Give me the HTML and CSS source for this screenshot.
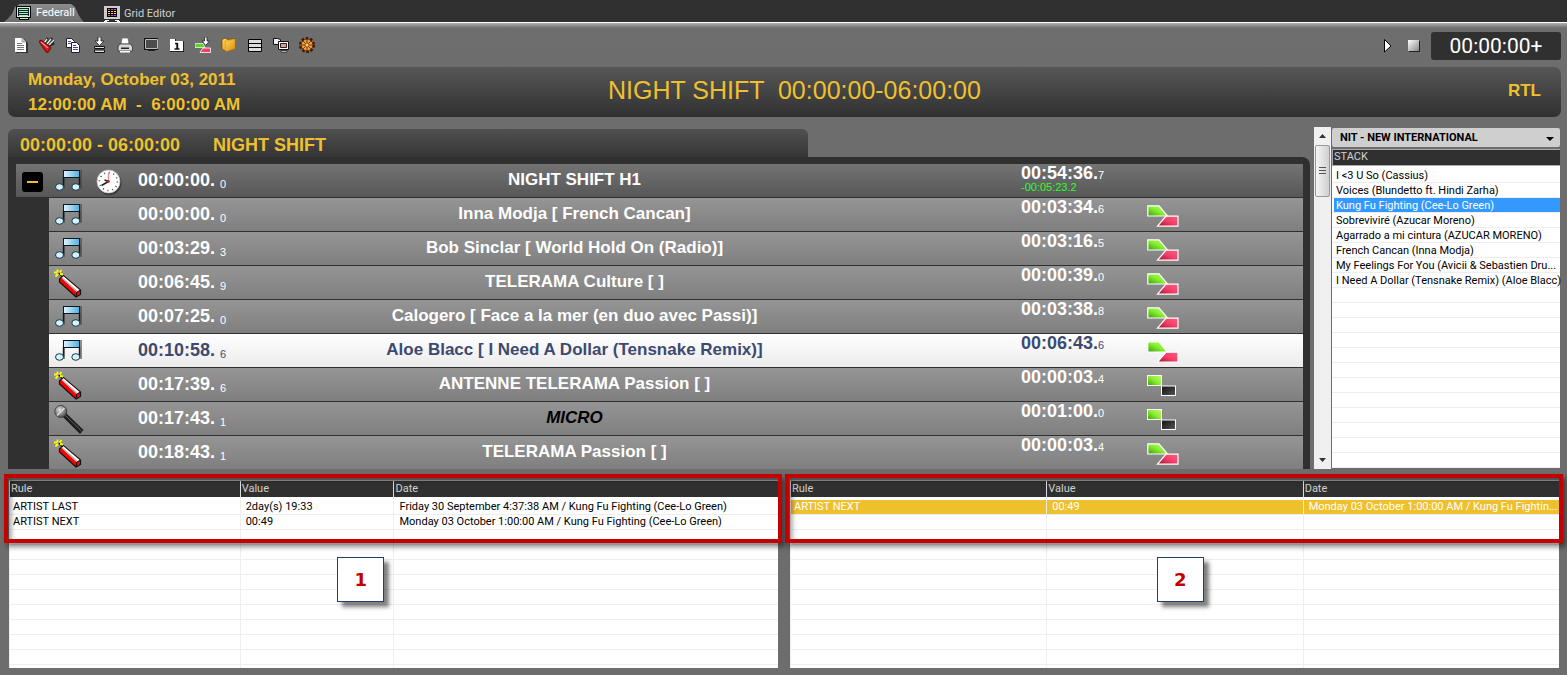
FILE: index.html
```html
<!DOCTYPE html>
<html lang="en">
<head>
<meta charset="utf-8">
<title>Federall - Grid Editor</title>
<link rel="stylesheet" href="styles.css">
</head>
<body>
<svg class="defs" aria-hidden="true">
  <defs>
    <linearGradient id="gBeam" x1="0" x2="1"><stop offset="0" stop-color="#e4f5fc"/><stop offset="1" stop-color="#4fb0de"/></linearGradient>
    <linearGradient id="gGreen" x1="0" y1="1" x2="1" y2="0"><stop offset="0" stop-color="#3f9a10"/><stop offset=".5" stop-color="#86f030"/><stop offset="1" stop-color="#c8f870"/></linearGradient>
    <linearGradient id="gRed" x1="0" y1="1" x2="1" y2="0"><stop offset="0" stop-color="#a01030"/><stop offset=".5" stop-color="#f04068"/><stop offset="1" stop-color="#ff6080"/></linearGradient>
    <linearGradient id="gBlack" x1="0" x2="1" y2="1"><stop offset="0" stop-color="#111"/><stop offset="1" stop-color="#555"/></linearGradient>
    <linearGradient id="gStop" x1="0" y1="0" x2="1" y2="1"><stop offset="0" stop-color="#fff"/><stop offset="1" stop-color="#888"/></linearGradient>
    <linearGradient id="gFolder" x1="0" y1="0" x2="1" y2="1"><stop offset="0" stop-color="#ffd860"/><stop offset="1" stop-color="#e08a08"/></linearGradient>
    <radialGradient id="gMic" cx=".4" cy=".35" r=".7"><stop offset="0" stop-color="#e0e0e0"/><stop offset="1" stop-color="#444"/></radialGradient>
    <symbol id="note" viewBox="0 0 30 24">
      <path d="M10 20V2h17v18" fill="none" stroke="#444" stroke-opacity=".6" stroke-width="2"/>
      <rect x="9.5" y="1.500" width="16" height="7" fill="url(#gBeam)" stroke="#0a1a24"/>
      <path d="M9.500 8v10M25.500 8v10" stroke="#0a1a24" stroke-width="1.400"/>
      <ellipse cx="5.500" cy="18" rx="4" ry="3.300" fill="#d8f2fb" stroke="#0d3a50"/>
      <ellipse cx="21.800" cy="18" rx="4" ry="3.300" fill="#d8f2fb" stroke="#0d3a50"/>
    </symbol>
    <symbol id="dynamite" viewBox="0 0 30 30">
      <path d="M5.500 10 9.300 6.500 26.500 21 26.500 25.500 22 28 5.500 13z" fill="#f00" stroke="#111" stroke-width="1.200"/>
      <path d="M7.500 8.800 9.500 7.200 25.600 21 22.800 23.300z" fill="#fff"/>
      <path d="M7.500 9 22.800 23.300 23.800 22.300 8.500 8.500z" fill="#aaa"/>
      <path d="M22.300 27.300 22.600 23.300 26 21.300" fill="none" stroke="#111"/>
      <path d="M5 4 8.500 8" stroke="#111" stroke-width="1.500"/>
      <path d="M0 3.500h3M1.500 7.500 4 5M3.500.5v3M7.500 1 5.500 3.500M6 5l3 .5" stroke="#ff0" stroke-width="1.800"/>
    </symbol>
    <symbol id="mic" viewBox="0 0 30 30">
      <path d="M8.500 11.500 12 8 29.500 25 26 29z" fill="#1c1c1c"/>
      <path d="M11 10 27.500 26" stroke="#666" stroke-width="1"/>
      <circle cx="6.800" cy="6.500" r="6" fill="url(#gMic)" stroke="#333" stroke-width=".8"/>
      <path d="M3 10.500 10.500 3" stroke="#ddd" stroke-width="1.400"/>
    </symbol>
    <symbol id="fade" viewBox="0 0 32 22">
      <path d="M.8.800H12L20.500 11H.8z" fill="url(#gGreen)" stroke="#fff" stroke-width="1.200"/>
      <path d="M10.500 21.200 19 11.200H31V21.200z" fill="url(#gRed)" stroke="#fff" stroke-width="1.200"/>
    </symbol>
    <symbol id="cut" viewBox="0 0 32 22">
      <rect x=".5" y=".5" width="14" height="10" fill="url(#gGreen)" stroke="#fff"/>
      <rect x="14.500" y="11" width="14" height="9.500" fill="url(#gBlack)" stroke="#fff"/>
    </symbol>
    <symbol id="clock" viewBox="0 0 26 26">
      <circle cx="13.500" cy="14" r="12" fill="#222" opacity=".6"/>
      <circle cx="12.500" cy="12.500" r="11.500" fill="#fff" stroke="#bbb" stroke-width=".8"/>
      <circle cx="12.500" cy="12.500" r="9" fill="none" stroke="#444" stroke-width="1.600" stroke-dasharray="1 3.712"/>
      <path d="M12.500 12.500V4" stroke="#e88" stroke-width="1.300"/>
      <path d="M13 12.500 8.500 11M12.500 12.500 5.500 16.500" stroke="#222" stroke-width="1.500"/>
      <circle cx="12.500" cy="12.500" r="1.300" fill="#c22"/>
    </symbol>
  </defs>
</svg>

<nav class="tabs">
  <a class="tab tab-active" href="#federall">
    <svg width="16" height="16" viewBox="0 0 16 16" shape-rendering="crispEdges"><path d="M0 1h15v12H0z" fill="#000"/><path d="M1 2h13v10H1z" fill="#c8f5cc"/><path d="M2 3h11v8H2z" fill="#123"/><path d="M3 4h9v1H3zM3 6h9v1H3zM3 8h9v1H3zM3 10h9v1H3z" fill="#a8f0b0"/><path d="M3 13h10v2H3z" fill="#000"/><path d="M4 13h8v1H4z" fill="#c8f5cc"/></svg>
    <span>Federall</span>
  </a>
  <a class="tab" href="#grid">
    <svg width="16" height="16" viewBox="0 0 16 16" shape-rendering="crispEdges"><path d="M0 0h16v13H0z" fill="#ccc"/><path d="M3 2h10v9H3z" fill="#000"/><path d="M4 3h2v1H4zM7 3h2v1H7zM10 3h2v1h-2zM4 9h2v1H4zM7 9h2v1H7zM10 9h2v1h-2z" fill="#e040e0"/><path d="M4 5h2v1H4zM7 5h2v1H7zM10 5h2v1h-2zM4 7h2v1H4zM7 7h2v1H7zM10 7h2v1h-2z" fill="#f0e020"/><path d="M1 14h4v1H1zM11 14h4v1h-4zM0 15h3v1H0zM13 15h3v1h-3z" fill="#fff"/></svg>
    <span>Grid Editor</span>
  </a>
</nav>

<header class="toolbar">
  <div class="tools">
    <button class="tool" aria-label="New"><svg viewBox="0 0 16 16"><path d="M3 2h8l4 4v10H3z" fill="#333"/><path d="M2 1h7l4 4v10H2z" fill="#fff"/><path d="M9 1v4h4" fill="#ccc" stroke="#777" stroke-width=".6"/><path d="M4 6.500h5M4 8.500h7M4 10.500h7M4 12.500h7" stroke="#777"/></svg></button>
    <button class="tool" aria-label="Tools"><svg viewBox="0 0 16 16"><path d="M5 6 9 1M8 7l5-6M10 9l5-6M12 8l3-2" stroke="#222" stroke-width="2.600"/><path d="M5 6 8 2M8 7l4-5M10 8l5-5" stroke="#eee" stroke-width="1.300"/><path d="M0 4.500 2 3 12 10.500 9 15.500 7 15z" fill="#e01010" stroke="#400" stroke-width=".8"/><path d="M2 5l7 6" stroke="#ff9090" stroke-width="1.200"/></svg></button>
    <button class="tool" aria-label="Copy"><svg viewBox="0 0 16 16"><path d="M1.500 1.500h5l3 3v6h-8z" fill="#fff" stroke="#222"/><path d="M3 4.500h3M3 6.500h4" stroke="#44b"/><path d="M6.500 5.500h5l3 3v7h-8z" fill="#fff" stroke="#222"/><path d="M8 8.500h3M8 10.500h5M8 12.500h5" stroke="#44b"/></svg></button>
    <button class="tool" aria-label="Import"><svg viewBox="0 0 16 16"><path d="M7 0h3v4h3L8.500 8.500 4 4h3z" fill="#fff" stroke="#222" stroke-width=".8"/><path d="M3.500 9.500h10v2h-10zM3.500 13h10v2.500h-10z" fill="#ddd" stroke="#111"/></svg></button>
    <button class="tool" aria-label="Print"><svg viewBox="0 0 16 16"><path d="M5 1h6l1 6H4z" fill="#fff" stroke="#666" stroke-width=".7"/><path d="M2.500 7h11l2 3v4H1v-4z" fill="#d8d8d8" stroke="#333" stroke-width=".8"/><path d="M4 10.500h8v1.500H4z" fill="#222"/><path d="M3 14h10v1.500H3z" fill="#fff"/></svg></button>
    <button class="tool" aria-label="Monitor"><svg viewBox="0 0 16 16"><path d="M1 1h14v12H1z" fill="#111"/><path d="M2.500 2.500h12v9h-12z" fill="#4c4c4c" stroke="#bbb"/><path d="M5 13.500h7" stroke="#222"/></svg></button>
    <button class="tool" aria-label="Day one"><svg viewBox="0 0 16 16"><path d="M1 2h6v2h8v11H1z" fill="#222"/><path d="M1 2h5v2h8v10H1z" fill="#fff"/><path d="M6 6.500h2v5M5.500 12h5M8.500 6v6" fill="none" stroke="#111" stroke-width="1.400"/></svg></button>
    <button class="tool" aria-label="Insert mix"><svg viewBox="0 0 16 16"><path d="M0 6.500h8l2 4H0z" fill="#58d820" stroke="#fff" stroke-width=".7"/><path d="M5 15.500 8 11h7.500v4.500z" fill="#f04068" stroke="#fff" stroke-width=".8"/><path d="M9.500 0h2.500v4h2.500L10.700 8.500 7 4h2.500z" fill="#fff" stroke="#222" stroke-width=".8"/></svg></button>
    <button class="tool" aria-label="Open folder"><svg viewBox="0 0 16 16"><path d="M1 2.500 4 1l3 1.500 7-1v10L5 14.500 1 12z" fill="url(#gFolder)" stroke="#6a4000" stroke-width=".7"/><path d="M4 4.500 14 2v9.500L5 14.500z" fill="url(#gFolder)" stroke="#d89010" stroke-width=".6"/></svg></button>
    <button class="tool" aria-label="List"><svg viewBox="0 0 16 16"><path d="M1.500 2.500h13v12h-13z" fill="#ddd" stroke="#000"/><path d="M1 6.500h14M1 10.500h14" stroke="#000"/></svg></button>
    <button class="tool" aria-label="Network"><svg viewBox="0 0 16 16"><path d="M.5 1.500h4l3 1v5h-7z" fill="#eee" stroke="#111"/><path d="M5.500 4.500h10v8h-10z" fill="#fff" stroke="#111"/><path d="M7.500 6.500h6v4h-6z" fill="#e0a080" stroke="#222"/><path d="M8 13.500h6v1.500H8z" fill="#fff" stroke="#111" stroke-width=".7"/></svg></button>
    <button class="tool" aria-label="Settings"><svg viewBox="0 0 16 16"><circle cx="8" cy="8" r="6.500" fill="none" stroke="#3a1800" stroke-width="3" stroke-dasharray="2.500 1.584"/><circle cx="8" cy="8" r="5.800" fill="#f0a040" stroke="#5a2800" stroke-width=".7"/><path d="M8 2v12M2 8h12M3.800 3.800l8.400 8.400M12.200 3.800l-8.400 8.400" stroke="#703000" stroke-width=".9"/><circle cx="8" cy="8" r="2" fill="#ffd090" stroke="#703000" stroke-width=".7"/></svg></button>
  </div>
  <div class="transport">
    <button class="tool" aria-label="Play"><svg viewBox="0 0 16 16"><path d="M4.500 2.500 11 9l-6.500 6z" fill="#fff" stroke="#000"/></svg></button>
    <button class="tool" aria-label="Stop"><svg viewBox="0 0 16 16"><path d="M3 4h11v11H3z" fill="#222"/><path d="M2 3h11v11H2z" fill="url(#gStop)"/></svg></button>
    <output class="counter">00:00:00+</output>
  </div>
</header>

<section class="banner">
  <div class="banner-date"><div>Monday, October 03, 2011</div><div class="pre">12:00:00 AM  -  6:00:00 AM</div></div>
  <h1 class="banner-title">NIGHT SHIFT  00:00:00-06:00:00</h1>
  <div class="banner-station">RTL</div>
</section>

<main class="main">
  <section class="schedule">
    <h2 class="schedule-tab"><span>00:00:00 - 06:00:00</span><span>NIGHT SHIFT</span></h2>
    <div class="tracks">
      <div class="track track-group">
        <div class="kinds"><button class="collapse" aria-label="Collapse"></button><svg class="i-note"><use href="#note"/></svg><svg class="i-clock"><use href="#clock"/></svg></div>
        <div class="start">00:00:00.<small>0</small></div><div class="name">NIGHT SHIFT H1</div>
        <div class="length">00:54:36.<small>7</small><div class="delta">-00:05:23.2</div></div><div></div>
      </div>
      <div class="track"><div class="kinds"><svg class="i-note"><use href="#note"/></svg></div><div class="start">00:00:00.<small>0</small></div><div class="name">Inna Modja [ French Cancan]</div><div class="length">00:03:34.<small>6</small></div><svg class="i-mix"><use href="#fade"/></svg></div>
      <div class="track"><div class="kinds"><svg class="i-note"><use href="#note"/></svg></div><div class="start">00:03:29.<small>3</small></div><div class="name">Bob Sinclar [ World Hold On (Radio)]</div><div class="length">00:03:16.<small>5</small></div><svg class="i-mix"><use href="#fade"/></svg></div>
      <div class="track"><div class="kinds"><svg class="i-obj"><use href="#dynamite"/></svg></div><div class="start">00:06:45.<small>9</small></div><div class="name">TELERAMA Culture [ ]</div><div class="length">00:00:39.<small>0</small></div><svg class="i-mix"><use href="#fade"/></svg></div>
      <div class="track"><div class="kinds"><svg class="i-note"><use href="#note"/></svg></div><div class="start">00:07:25.<small>0</small></div><div class="name">Calogero [ Face a la mer (en duo avec Passi)]</div><div class="length">00:03:38.<small>8</small></div><svg class="i-mix"><use href="#fade"/></svg></div>
      <div class="track track-selected"><div class="kinds"><svg class="i-note"><use href="#note"/></svg></div><div class="start">00:10:58.<small>6</small></div><div class="name">Aloe Blacc [ I Need A Dollar (Tensnake Remix)]</div><div class="length">00:06:43.<small>6</small></div><svg class="i-mix"><use href="#fade"/></svg></div>
      <div class="track"><div class="kinds"><svg class="i-obj"><use href="#dynamite"/></svg></div><div class="start">00:17:39.<small>6</small></div><div class="name">ANTENNE TELERAMA Passion [ ]</div><div class="length">00:00:03.<small>4</small></div><svg class="i-mix"><use href="#cut"/></svg></div>
      <div class="track"><div class="kinds"><svg class="i-obj"><use href="#mic"/></svg></div><div class="start">00:17:43.<small>1</small></div><div class="name name-live">MICRO</div><div class="length">00:01:00.<small>0</small></div><svg class="i-mix"><use href="#cut"/></svg></div>
      <div class="track"><div class="kinds"><svg class="i-obj"><use href="#dynamite"/></svg></div><div class="start">00:18:43.<small>1</small></div><div class="name">TELERAMA Passion [ ]</div><div class="length">00:00:03.<small>4</small></div><svg class="i-mix"><use href="#fade"/></svg></div>
    </div>
  </section>

  <div class="scroll">
    <button class="scroll-btn" aria-label="Scroll up"><svg width="7" height="4" viewBox="0 0 7 4"><path d="M0 4 3.500 0 7 4z" fill="#333"/></svg></button>
    <div class="scroll-thumb"></div>
    <button class="scroll-btn scroll-down" aria-label="Scroll down"><svg width="7" height="4" viewBox="0 0 7 4"><path d="M0 0h7L3.500 4z" fill="#333"/></svg></button>
  </div>

  <aside class="stack">
    <div class="picker">
      <select class="picker-select" aria-label="Category"><option>NIT - NEW INTERNATIONAL</option></select>
      <svg class="picker-arrow" width="8" height="4" viewBox="0 0 8 4"><path d="M0 0h8L4 4z" fill="#000"/></svg>
    </div>
    <h3 class="stack-head">STACK</h3>
    <ul class="stack-list">
      <li>I &lt;3 U So (Cassius)</li>
      <li>Voices (Blundetto ft. Hindi Zarha)</li>
      <li class="on">Kung Fu Fighting (Cee-Lo Green)</li>
      <li>Sobreviviré (Azucar Moreno)</li>
      <li>Agarrado a mi cintura (AZUCAR MORENO)</li>
      <li>French Cancan (Inna Modja)</li>
      <li>My Feelings For You (Avicii &amp; Sebastien Dru...</li>
      <li>I Need A Dollar (Tensnake Remix) (Aloe Blacc)</li>
    </ul>
  </aside>
</main>

<section class="rules">
  <div class="panel">
    <table class="grid grid-last">
      <thead><tr><th>Rule</th><th>Value</th><th>Date</th></tr></thead>
      <tbody>
        <tr><td>ARTIST LAST</td><td>2day(s) 19:33</td><td>Friday 30 September 4:37:38 AM / Kung Fu Fighting (Cee-Lo Green)</td></tr>
        <tr><td>ARTIST NEXT</td><td>00:49</td><td>Monday 03 October 1:00:00 AM / Kung Fu Fighting (Cee-Lo Green)</td></tr>
        <tr class="rest"><td></td><td></td><td></td></tr>
      </tbody>
    </table>
    <div class="mark"></div>
    <div class="badge badge-one">1</div>
  </div>
  <div class="panel">
    <table class="grid">
      <thead><tr><th>Rule</th><th>Value</th><th>Date</th></tr></thead>
      <tbody>
        <tr class="hit"><td>ARTIST NEXT</td><td>00:49</td><td>Monday 03 October 1:00:00 AM / Kung Fu Fightin...</td></tr>
        <tr class="rest"><td></td><td></td><td></td></tr>
      </tbody>
    </table>
    <div class="mark"></div>
    <div class="badge badge-two">2</div>
  </div>
</section>
</body>
</html>
```
FILE: styles.css
```css
* { box-sizing: border-box; }
body {
  margin: 0;
  min-height: 100vh;
  display: flex;
  flex-direction: column;
  background: #6d6d6d;
  font-family: Roboto, "Liberation Sans", Arial, sans-serif;
  font-size: 11px;
  color: #000;
}
button { border: 0; padding: 0; background: none; }
h1, h2, h3, ul { margin: 0; padding: 0; font-size: inherit; }
svg { display: block; flex: none; }
.defs { position: absolute; width: 0; height: 0; }

/* tabs */
.tabs {
  display: flex;
  gap: 16px;
  height: 22px;
  padding: 4px 4px 0;
  background: #303030;
}
.tab {
  display: flex;
  gap: 4px;
  padding: 2px 4px 0;
  line-height: 16px;
  color: #d0d0d0;
  text-decoration: none;
}
.tab-active {
  width: 80px;
  padding: 1px 0 0 12px;
  color: #fff;
  background: linear-gradient(#8c8c8c, #6e6e6e);
  clip-path: polygon(0 100%, 4px 80%, 8px 10px, 11px 3px, 16px 0, 67px 0, 71px 3px, 74px 10px, 78px 90%, 100% 100%);
}

/* toolbar */
.toolbar {
  display: flex;
  justify-content: space-between;
  align-items: center;
  height: 45px;
  padding: 0 6px 0 8px;
  border-top: 1px solid #fff;
  background: linear-gradient(#b0b0b0, #8a8a8a 3px, #6e6e6e 5px, #6d6d6d);
}
.tools, .transport { display: flex; align-items: center; }
.tool { display: flex; justify-content: center; width: 26px; height: 20px; align-items: center; }
.tool svg { width: 16px; height: 16px; }
.counter {
  width: 130px;
  height: 28px;
  margin: 2px 0 0 4px;
  border-radius: 3px;
  background: #303030;
  color: #fff;
  font: 21px/28px Roboto, "Liberation Sans", sans-serif;
  text-align: center;
}

/* banner */
.banner {
  display: grid;
  grid-template-columns: 1fr auto 1fr;
  align-items: center;
  height: 50px;
  margin: 0 6px 10px 8px;
  padding-left: 20px;
  border-radius: 7px;
  background: linear-gradient(#575757, #303030);
  color: #efc02e;
  font-family: "Liberation Sans", Arial, sans-serif;
  font-size: 17px;
  line-height: 25px;
  font-weight: bold;
}
.pre, .banner-title { white-space: pre; }
.banner-title { padding-bottom: 3px; font-size: 25px; font-weight: normal; }
.banner-station { padding: 0 20px 3px 0; text-align: right; }

/* main */
.main { display: flex; padding: 0 7px 0 8px; }
.schedule { flex: 1; padding-top: 2px; font-family: "Liberation Sans", Arial, sans-serif; }
.schedule-tab {
  display: flex;
  gap: 33px;
  width: 800px;
  max-width: 100%;
  height: 28px;
  padding-left: 12px;
  border-radius: 6px 6px 0 0;
  background: linear-gradient(#505050, #353535);
  color: #efc02e;
  font-size: 18px;
  line-height: 32px;
}
.tracks {
  padding: 7px 7px 0 8px;
  border-radius: 0 8px 0 0;
  background: #303030;
}
.track {
  display: grid;
  grid-template-columns: 89px 100px 1fr 110px 126px 156px;
  height: 34px;
  margin-left: 33px;
  border-bottom: 1px solid #303030;
  background: linear-gradient(#959595, #7f7f7f);
  color: #fff;
  font-size: 18px;
  font-weight: bold;
  line-height: 32px;
}
.track:last-child { height: 33px; border-bottom: 0; }
.track-group {
  grid-template-columns: 122px 100px 1fr 110px 126px 156px;
  margin-left: 0;
  background: linear-gradient(#737373, #575757);
}
.track-selected { background: linear-gradient(#fff, #ebebeb); color: #3d4a70; }
.kinds { display: flex; padding-left: 5px; }
.track-group .kinds { padding-left: 6px; }
.track small { font-size: 11px; font-weight: normal; }
.start small { margin-left: 5px; vertical-align: -2px; }
.name { font-size: 17px; text-align: center; white-space: nowrap; }
.name-live { color: #000; font-style: italic; }
.length { grid-column: 5; line-height: 19px; }
.delta { color: #2bff2b; font-size: 11px; font-weight: normal; line-height: 4px; }
.collapse {
  width: 21px;
  height: 20px;
  margin: 8px 11px 0 0;
  border-radius: 3px;
  background: linear-gradient(#efc02e, #efc02e) center / 11px 2px no-repeat #000;
}
.i-note { width: 30px; height: 24px; margin-top: 5px; }
.i-obj { width: 30px; height: 30px; margin-top: 3px; }
.i-clock { width: 26px; height: 26px; margin: 5px 0 0 12px; }
.i-mix { width: 32px; height: 22px; margin-top: 7px; }

/* scrollbar */
.scroll {
  display: flex;
  flex-direction: column;
  width: 17px;
  margin: 0 1px 0 4px;
  background: #f0f0f0;
}
.scroll-btn { display: flex; align-items: center; justify-content: center; height: 18px; }
.scroll-down { margin-top: auto; }
.scroll-thumb {
  height: 52px;
  margin: 0 1px;
  border: 1px solid #999;
  border-radius: 2px;
  background:
    repeating-linear-gradient(#555 0 1px, transparent 1px 3px) center 21px / 7px 8px no-repeat,
    linear-gradient(90deg, #f6f6f6, #cfcfcf);
}

/* stack */
.stack { display: flex; flex-direction: column; width: 228px; padding: 1px 0; }
.picker { position: relative; margin-bottom: 2px; }
.picker-select {
  display: block;
  width: 100%;
  height: 19px;
  padding: 0 8px;
  border: 0;
  border-radius: 2px;
  appearance: none;
  background: #cfcfcf;
  color: #000;
  font: bold 11px Roboto, "Liberation Sans", sans-serif;
}
.picker-arrow { position: absolute; right: 6px; top: 9px; }
.stack-head {
  height: 17px;
  padding-left: 1px;
  border: 1px solid #aaa;
  border-width: 1px 0 1px 1px;
  background: #303030;
  color: #d0d0d0;
  font-weight: normal;
  line-height: 14px;
}
.stack-list {
  flex: 1;
  padding-top: 2px;
  list-style: none;
  background: repeating-linear-gradient(#fff 0 14px, #eee 14px 15px) 0 2px #fff;
}
.stack-list li {
  height: 15px;
  padding-left: 4px;
  border-bottom: 1px solid #eee;
  line-height: 15px;
  white-space: nowrap;
}
.stack-list .on { margin-left: 2px; padding-left: 2px; background: #3399ff; color: #fff; }

/* rules */
.rules {
  flex: 1;
  display: flex;
  gap: 12px;
  margin-top: 11px;
  padding: 0 8px 7px 9px;
}
.panel { position: relative; flex: 1; display: flex; border-top: 1px solid #999; background: #fff; }
.grid { width: 100%; table-layout: fixed; border-spacing: 0; }
.grid th {
  width: 33%;
  height: 19px;
  padding: 0 1px 1px;
  border-left: 1px solid #ddd;
  border-bottom: 3px solid #fff;
  background: #303030;
  color: #d0d0d0;
  font-weight: normal;
  line-height: 15px;
  text-align: left;
}
.grid-last th:nth-child(1) { width: 30%; }
.grid-last th:nth-child(2) { width: 20%; }
.grid-last th:nth-child(3) { width: 50%; }
.grid td {
  height: 15px;
  padding: 0 5px;
  border-left: 1px solid #eee;
  border-bottom: 1px solid #eee;
  line-height: 14px;
  white-space: nowrap;
}
.grid td:first-child { padding-left: 3px; }
.grid .hit td { background: #efc02e; color: #fff; }
.grid .rest td { height: auto; border-bottom: 0; background: repeating-linear-gradient(#fff 0 14px, #eee 14px 15px); }
.mark {
  position: absolute;
  left: -5px;
  right: -4px;
  top: -7px;
  height: 69px;
  border: 4px solid #c40000;
  box-shadow: 3px 4px 5px rgba(0, 0, 0, .45), inset 4px 3px 4px rgba(0, 0, 0, .3);
}
.badge {
  position: absolute;
  top: 76px;
  width: 47px;
  height: 45px;
  border: 1px solid #1f3f6f;
  background: #fff;
  box-shadow: 5px 5px 4px rgba(0, 0, 0, .5);
  color: #c00000;
  font: bold 18px/43px "DejaVu Sans", sans-serif;
  text-align: center;
}
.badge-one { left: 42.7%; }
.badge-two { left: 47.7%; }
```
